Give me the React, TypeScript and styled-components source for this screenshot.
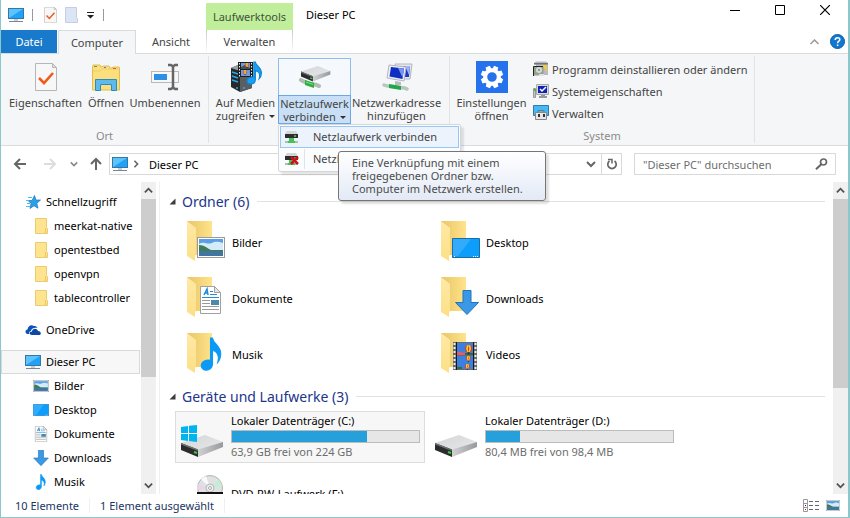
import React from "react";
import styled, { createGlobalStyle, css } from "styled-components";

const GlobalStyle = createGlobalStyle`
  * { box-sizing: border-box; }
  body { margin: 0; background: #8cc8cb; font-family: "Noto Sans", "Open Sans", sans-serif; font-size: 11px; color: #000; }
  button, input { font: inherit; color: inherit; border: 0; padding: 0; margin: 0; background: none; }
  a { color: inherit; text-decoration: none; }
  ul { list-style: none; margin: 0; padding: 0; }
  h1, h2 { margin: 0; font-weight: 400; }
  svg { display: block; flex: none; }
`;

const Window = styled.div`
  display: flex;
  flex-direction: column;
  height: 100vh;
  background: #fff;
  border: solid #8cc8cb;
  border-width: 0 2px 1px 1px;
  overflow: hidden;
`;

/* ---------- title bar ---------- */
const TitleBar = styled.header`
  display: flex;
  height: 30px;
  flex: none;
`;
const QuickAccess = styled.div`
  display: flex;
  align-items: center;
  width: 205px;
  padding-left: 7px;
  gap: 8px;
`;
const QuickDivider = styled.span`
  width: 1px;
  height: 12px;
  background: #9a9a9a;
  margin-right: 3px;
`;
const ContextLabel = styled.div`
  width: 87px;
  margin-top: 3px;
  background: #c0ee9b;
  color: #41543a;
  line-height: 28px;
  text-align: center;
  white-space: nowrap;
`;
const WindowTitle = styled.h1`
  flex: 1;
  padding-left: 13px;
  font-size: 11px;
  line-height: 30px;
`;
const WindowControls = styled.div`
  display: flex;
  padding-right: 1px;
`;
const WindowButton = styled.button`
  display: grid;
  place-items: center;
  width: 45px;
  height: 20px;
`;

/* ---------- tabs ---------- */
const TabRow = styled.nav`
  display: flex;
  height: 24px;
  flex: none;
  border-bottom: 1px solid #dadbdc;
`;
const Tab = styled.button<{ $width: number; $kind?: "file" | "active" | "context" }>`
  width: ${(p) => p.$width}px;
  height: 23px;
  color: #444;
  white-space: nowrap;
  ${(p) => p.$kind === "file" && css`background: #1979ca; color: #fff; margin-right: 1px;`}
  ${(p) => p.$kind === "active" && css`
    height: 24px;
    background: #f5f6f7;
    border: 1px solid #dadbdc;
    border-bottom: 0;
  `}
  ${(p) => p.$kind === "context" && css`
    border: solid transparent;
    border-width: 0 1px;
    border-image: linear-gradient(#c8c8c8, #fff) 1;
  `}
`;
const TabTools = styled.div`
  display: flex;
  align-items: center;
  gap: 11px;
  margin-left: auto;
  padding-right: 3px;
`;

/* ---------- ribbon ---------- */
const Ribbon = styled.section`
  display: flex;
  height: 92px;
  flex: none;
  background: #f5f6f7;
  border-bottom: 1px solid #dadbdc;
  padding: 2px 0;
  color: #444;
`;
const RibbonGroup = styled.div<{ $width: number }>`
  display: flex;
  flex-direction: column;
  width: ${(p) => p.$width}px;
  border-right: 1px solid #e2e3e4;
`;
const GroupBody = styled.div`
  display: flex;
  flex: 1;
  padding: 2px 0 0 4px;
`;
const GroupLabel = styled.div`
  line-height: 14px;
  text-align: center;
  color: #8a8a8a;
`;
const BigButton = styled.button<{ $width: number }>`
  display: flex;
  flex-direction: column;
  align-items: center;
  width: ${(p) => p.$width}px;
  height: 66px;
  white-space: nowrap;
`;
const BigIcon = styled.span`
  display: grid;
  place-items: center;
  width: 100%;
  height: 38px;
`;
const BigText = styled.span`
  flex: 1;
  width: 100%;
  line-height: 13px;
`;
const SplitButton = styled.div`
  position: relative;
  width: 73px;
  height: 66px;
`;
const SplitTop = styled.button`
  display: grid;
  place-items: center;
  width: 100%;
  height: 38px;
  background: #f5f9fd;
  border: 1px solid #90bdeb;
`;
const SplitBottom = styled.button`
  display: block;
  width: 100%;
  height: 29px;
  margin-top: -1px;
  line-height: 13px;
  white-space: nowrap;
  background: #c9dff5;
  border: 1px solid #6ea7e3;
`;
const Caret = styled.i`
  display: inline-block;
  margin-left: 4px;
  vertical-align: 2px;
  border: solid transparent;
  border-width: 3px 3px 0;
  border-top-color: #333;
`;
const SmallList = styled.div`
  display: flex;
  flex-direction: column;
  margin-left: 4px;
`;
const SmallButton = styled.button`
  display: flex;
  align-items: center;
  gap: 3px;
  height: 22px;
  white-space: nowrap;
`;

/* ---------- drop-down menu and tooltip ---------- */
const Menu = styled.ul`
  position: absolute;
  z-index: 2;
  top: 66px;
  left: 0;
  width: 183px;
  padding: 1px;
  background: #fbfcfd;
  border: 1px solid #d5d6d8;
  border-radius: 2px;
  box-shadow: 3px 3px 2px rgba(0, 0, 0, 0.1);
`;
const MenuItem = styled.button<{ $active?: boolean }>`
  display: flex;
  align-items: center;
  width: 100%;
  height: 22px;
  padding-left: 3px;
  border: 1px solid ${(p) => (p.$active ? "#98c6f5" : "transparent")};
  background: ${(p) => (p.$active ? "#ecf3fc" : "transparent")};
  svg { margin-right: 4px; }
  span {
    padding-left: 8px;
    border-left: 1px solid ${(p) => (p.$active ? "transparent" : "#e2e3e4")};
    line-height: 20px;
    white-space: nowrap;
  }
`;
const Tooltip = styled.div`
  position: absolute;
  z-index: 3;
  top: 93px;
  left: 60px;
  width: 208px;
  padding: 4px 13px 5px;
  line-height: 13px;
  color: #4c4c4c;
  white-space: nowrap;
  background: linear-gradient(#fff, #e3eaf6);
  border: 1px solid #767676;
  border-radius: 3px;
  box-shadow: 3px 3px 2px rgba(0, 0, 0, 0.12);
`;

/* ---------- address row ---------- */
const AddressRow = styled.div`
  display: flex;
  align-items: center;
  height: 36px;
  flex: none;
  padding: 0 12px 0 11px;
`;
const NavButton = styled.button<{ $after?: number }>`
  display: grid;
  place-items: center;
  width: 16px;
  height: 20px;
  margin-right: ${(p) => p.$after ?? 0}px;
`;
const AddressBox = styled.div`
  display: flex;
  align-items: center;
  flex: 1;
  height: 22px;
  margin-right: 12px;
  padding-left: 2px;
  border: 1px solid #d9d9d9;
`;
const Crumb = styled.a`
  flex: 1;
  padding-left: 5px;
`;
const AddressButton = styled.button<{ $line?: boolean }>`
  display: grid;
  place-items: center;
  width: 20px;
  height: 20px;
  border-left: ${(p) => (p.$line ? "1px solid #d9d9d9" : "0")};
`;
const SearchBox = styled.label`
  display: flex;
  align-items: center;
  width: 202px;
  height: 22px;
  padding: 0 7px 0 8px;
  border: 1px solid #d9d9d9;
  input { flex: 1; min-width: 0; outline: 0; }
  input::placeholder { color: #6d6d6d; opacity: 1; }
`;

/* ---------- body ---------- */
const Body = styled.div`
  display: flex;
  flex: 1;
  min-height: 0;
`;
const Sidebar = styled.nav`
  width: 140px;
  padding: 8px 1px 0 0;
  overflow: hidden;
`;
const TreeItem = styled.a<{ $level?: number; $selected?: boolean; $gap?: boolean }>`
  display: flex;
  align-items: center;
  gap: 5px;
  height: 24px;
  margin-top: ${(p) => (p.$gap ? 8 : 0)}px;
  padding: 0 0 1px ${(p) => (p.$level ? 31 : 23)}px;
  white-space: nowrap;
  border: 1px solid ${(p) => (p.$selected ? "#d9d9d9" : "transparent")};
  background: ${(p) => (p.$selected ? "#f7f7f7" : "transparent")};
`;
const ScrollTrack = styled.div`
  display: flex;
  flex-direction: column;
  width: 15px;
  flex: none;
  background: #f0f0f0;
`;
const ScrollArrow = styled.button`
  display: grid;
  place-items: center;
  height: 17px;
`;
const ScrollThumb = styled.div<{ $share: number }>`
  flex: ${(p) => p.$share};
  background: #cdcdcd;
`;
const ScrollRest = styled.div<{ $share: number }>`
  flex: ${(p) => p.$share};
`;
const Content = styled.main`
  flex: 1;
  min-width: 0;
  margin-left: 3px;
  padding: 8px 8px 0 9px;
  border-left: 1px solid #f0f0f0;
  overflow: hidden;
`;
const SectionHeader = styled.h2`
  display: flex;
  align-items: center;
  height: 23px;
  padding-bottom: 1px;
  font-size: 14px;
  color: #22358c;
  white-space: nowrap;
  svg { margin-right: 6px; }
  &::after { content: ""; flex: 1; height: 1px; margin-left: 8px; background: #e2e2e2; }
`;
const Tiles = styled.div`
  display: grid;
  grid-template-columns: 250px 250px;
  grid-auto-rows: 52px;
  gap: 4px;
  padding: 3px 0 5px 6px;
`;
const Tile = styled.a<{ $selected?: boolean; $folder?: boolean }>`
  display: flex;
  align-items: center;
  gap: 6px;
  padding-left: ${(p) => (p.$folder ? 11 : 5)}px;
  white-space: nowrap;
  border: 1px solid ${(p) => (p.$selected ? "#dcdcdc" : "transparent")};
  background: ${(p) => (p.$selected ? "#f7f7f7" : "transparent")};
`;
const DriveInfo = styled.div`
  display: flex;
  flex-direction: column;
  padding-bottom: 2px;
  line-height: 16px;
`;
const Muted = styled.span`
  color: #6d6d6d;
`;
const Meter = styled.div`
  width: 189px;
  height: 13px;
  margin: 1px 0;
  background: #e6e6e6;
  border: 1px solid #bcbcbc;
`;
const MeterFill = styled.div`
  height: 100%;
  background: #26a0da;
`;

/* ---------- status bar ---------- */
const StatusBar = styled.footer`
  display: flex;
  align-items: center;
  height: 23px;
  flex: none;
  padding: 0 8px 0 14px;
  color: #22365f;
`;
const StatusText = styled.span`
  padding-right: 10px;
  margin-right: 10px;
  border-right: 1px solid #f0f0f0;
`;
const ViewButtons = styled.div`
  display: flex;
  align-items: center;
  gap: 6px;
  margin-left: auto;
`;

/* ---------- icons ---------- */
const PcIcon = () => (
  <svg width="16" height="16" viewBox="0 0 16 16">
    <rect x=".5" y="1.5" width="15" height="10" fill="#5cc3fd" stroke="#3576a3" />
    <path d="M1 11 15 2v9z" fill="#1fa2f8" />
    <path d="M6 12h4v2H6z" fill="#c7ced4" />
    <path d="M1 14.5h14" stroke="#76879a" />
  </svg>
);
const CheckDoc = ({ w, h }: { w: number; h: number }) => (
  <svg width={w} height={h} viewBox="0 0 22 28">
    <path d="M.5.5h17l4 4v23H.5z" fill="#f7f7f7" stroke="#b6b6b6" />
    <path d="M17.5.5v4h4z" fill="#ddd" stroke="#b6b6b6" />
    <path d="m4 15 5 5L18 10" fill="none" stroke="#f05a1a" strokeWidth="2.600" />
  </svg>
);
const OpenIcon = () => (
  <svg width="28" height="28" viewBox="0 0 28 28">
    <path d="M.5 3.5 1 2h7l1 2h1l1-1h6l1 2h2l1-1h6l.5 1v22H.5z" fill="#fbdf7d" stroke="#e3bd50" />
    <path d="M1 8h7l2-2h17" stroke="#efcd68" fill="none" />
    <path d="M2 3.5h3" stroke="#4aa84a" /><path d="M12 4.5h2" stroke="#3c8ad8" /><path d="M21 5.5h3" stroke="#d85a3c" />
    <path d="M3.500 27.500V16.500h21v11h-5v-6h-11v6z" fill="#5fb9ec" stroke="#2b8cc4" />
  </svg>
);
const RenameIcon = () => (
  <svg width="28" height="28" viewBox="0 0 28 28">
    <rect x=".5" y="8.500" width="27" height="11" fill="#f8f8f8" stroke="#b9b9b9" />
    <rect x="3" y="11" width="13" height="6" fill="#2e8fe5" />
    <path d="M17 2h3l2 1.500L24 2h3M17 26h3l2-1.500 2 1.500h3M22 3v22" stroke="#666" strokeWidth="2.500" fill="none" />
  </svg>
);
const Balloon = ({ x, y, s = 1 }: { x: number; y: number; s?: number }) => (
  <g transform={`translate(${x} ${y}) scale(${s})`}>
    <circle cx="4" cy="4" r="4" fill="#d83a2c" />
    <path d="M2 .6Q.5 4 2.500 7.500L4 8Q2.500 4 4 0zM6 .6Q7.500 4 5.500 7.500L4 8Q5.500 4 4 0z" fill="#f6d52c" />
    <path d="M3 8h2v2H3z" fill="#3c3018" />
  </g>
);
const notePath = "M9 0h2c.5 5 8 7 8 14 0 3-1 6-3 8 2-7-1-10-5-11v12c0 4-3 6-6 6-3 0-5-2-5-4 0-4 5-6 9-5z";
const MediaIcon = () => (
  <svg width="32" height="32" viewBox="0 0 32 32">
    <path d="M1 7 8 4l14 3v20l-12 4-9-5z" fill="#26292b" />
    <path d="M10 10 22 7v20l-12 4z" fill="#5b5e60" />
    <path d="M1 7 8 4l14 3-12 3z" fill="#9b9fa2" />
    <path d="m2 11 6 2M2 15l6 2M2 19l6 2" stroke="#2ca8ea" strokeWidth="1.500" />
    <circle cx="14" cy="27" r="1" fill="#2ca8ea" /><circle cx="7" cy="27" r="1" fill="#2ca8ea" />
    <path d="M8 1h15v15H8z" fill="#202020" /><path d="M11 2h9v6h-9zM11 9h9v6h-9z" fill="#6f9ade" />
    <path d="M11 6l4-2 5 3v1h-9z" fill="#43535f" />
    <path d="M9.500 2v14M21.500 2v14" stroke="#eee" strokeDasharray="1.500 1.500" />
    <Balloon x={15} y={2} s={0.500} /><Balloon x={13} y={9} s={0.500} />
    <g transform="translate(17 1) scale(.76)"><path d={notePath} fill="#18a0f2" stroke="#0d86d8" strokeWidth="1.500" /></g>
  </svg>
);
const DriveShape = () => (
  <g>
    <defs>
      <linearGradient id="driveTop" x2="1" y2="1"><stop offset="0" stopColor="#d3d5d7" /><stop offset="1" stopColor="#e6e8ea" /></linearGradient>
      <linearGradient id="driveSide"><stop offset="0" stopColor="#cfd1d3" /><stop offset="1" stopColor="#97999c" /></linearGradient>
    </defs>
    <path d="M0 8 24 0l18 7-25 8z" fill="url(#driveTop)" />
    <path d="M17 14.500 42 7v5l-25 10z" fill="url(#driveSide)" />
    <path d="M0 8l17 6.500V22L0 15z" fill="#2b2c2e" />
    <path d="M0 8l17 6.500V16L0 9.500z" fill="#6f7173" />
    <path d="M13 17l3 1" stroke="#35d23c" strokeWidth="2" />
  </g>
);
const NetDriveIcon = () => (
  <svg width="32" height="26" viewBox="0 0 32 26">
    <g transform="translate(2 2) scale(.7)"><DriveShape /></g>
    <path d="M2 16c4 2 6 4 10 4s5 1 8 2" stroke="#aebfb2" strokeWidth="4" strokeLinecap="round" fill="none" />
    <path d="M6 16l9 3v5l-9-3z" fill="#2fae42" /><path d="M7 18l7 2.500" stroke="#75e583" />
  </svg>
);
const NetAddressIcon = () => (
  <svg width="32" height="32" viewBox="0 0 32 32">
    <path d="M14 3h17l-2 15H17z" fill="#e8e9ed" stroke="#b4b6bf" /><path d="M17 5h12l-1 11H18z" fill="#1539c9" />
    <path d="m24 5 5 0-1 9z" fill="#9db3f6" />
    <path d="M8 4 25 6l-2 14-17-3z" fill="#eceef3" stroke="#b5b7c0" /><path d="m10 6 13 1.500L21.500 18 8.500 15.500z" fill="#0e2fc1" />
    <path d="m17 7 6 .5-1.500 9z" fill="#7695f3" />
    <path d="M14 20l6 1v3h-6z" fill="#bbb" />
    <path d="M3 24c4 2 8 1 12 2s8 0 11 2" stroke="#b7c7bd" strokeWidth="3.500" fill="none" strokeLinecap="round" />
    <path d="M8 23l12 2v4L8 27z" fill="#1ea84a" />
  </svg>
);
const gearTeeth = [0, 45, 90, 135, 180, 225, 270, 315];
const SettingsIcon = () => (
  <svg width="32" height="32" viewBox="0 0 32 32">
    <path d="M0 0h32v32H0z" fill="#2672ec" />
    <circle cx="16" cy="16" r="6.800" fill="none" stroke="#fff" strokeWidth="4" />
    {gearTeeth.map((a) => (
      <path key={a} d="M13.200 8.500 13.800 4.800h4.400l.6 3.700z" fill="#fff" transform={`rotate(${a + 22} 16 16)`} />
    ))}
  </svg>
);
const UninstallIcon = () => (
  <svg width="16" height="16" viewBox="0 0 16 16">
    <path d="M1 2l2-1.500h10L15 2v12H3V4z" fill="#b9bbc4" /><path d="M1 2h14v1.500H1z" fill="#6d7580" />
    <path d="M9 4h5v7z" fill="#f1c93b" /><path d="M.5 5.500h10v9H.5z" fill="#93a18f" /><path d="M.5 15V5.500H10" fill="none" stroke="#222" />
    <circle cx="6" cy="9" r="3" fill="#d5ddd4" /><circle cx="6" cy="9" r="1" fill="#7a7a7a" /><path d="M6 13h5v2H6z" fill="#e2e2e2" />
  </svg>
);
const SystemIcon = () => (
  <svg width="16" height="16" viewBox="0 0 16 16">
    <path d="M.5 5.500h2v9h-2z" fill="#c8c8c8" stroke="#999" /><path d="M1 6h2v2H1z" fill="#41b949" />
    <path d="M3.500 1.500h12v10h-12z" fill="#dadada" stroke="#aaa" /><path d="M5 3h9v7H5z" fill="#1022b5" />
    <path d="m7 6 2 2 4-4" stroke="#fff" strokeWidth="1.500" fill="none" /><path d="M8 12h4v1h2v2H6v-2h2z" fill="#999" />
  </svg>
);
const ManageIcon = () => (
  <svg width="16" height="16" viewBox="0 0 16 16">
    <path d="M.5.5h15v10H.5z" fill="#45b8f7" stroke="#3779a3" />
    <path d="M5 7V5.500h6V7" fill="none" stroke="#777" /><path d="M2.500 7.500h11v7h-11z" fill="#e8e8e8" stroke="#888" />
    <path d="M5 9h2v3H5zM10 9h2v3h-2z" fill="#333" />
  </svg>
);
const MenuDriveIcon = ({ cross }: { cross?: boolean }) => (
  <svg width="16" height="16" viewBox="0 0 16 16">
    <path d="M3 2h9l2 3H1z" fill="#d4d5d6" /><path d="M1 5h13v4H1z" fill="#2c2e30" /><path d="M10 7h2" stroke="#43d24c" strokeWidth="1.500" />
    <path d="M5 9h5v3h4v2H1v-2h4z" fill="#4cbf5a" /><path d="M1 12h3v2H1zM11 12h3v2h-3z" fill="#9ccba1" />
    {cross && <path d="m7 6 7 7m0-7-7 7" stroke="#d0111b" strokeWidth="2.500" />}
  </svg>
);
const StarIcon = () => (
  <svg width="16" height="16" viewBox="0 0 16 16">
    <path d="M9.500 1.500 11 6h4.500l-3.700 3.200 1.200 5L9 11.800 5 14.500 6 9.500 3 6.500h4z" fill="#2aa0e8" stroke="#1778bd" strokeWidth=".7" />
    <path d="M3 3.500h4M1 6.500h3M2 9.500h3M1 12.500h4" stroke="#55b7ef" />
  </svg>
);
const YellowFolder = () => (
  <svg width="16" height="18" viewBox="0 0 16 18">
    <path d="M2.500 1.500h11v9l1 1v5h-12z" fill="#ffe48f" stroke="#eccb6c" /><path d="M12.500 11v5.500" stroke="#e8c766" />
  </svg>
);
const CloudIcon = () => (
  <svg width="16" height="16" viewBox="0 0 16 16">
    <path d="M3 12C0 12-.5 8 2.500 7.500 3 4 6 2 9 4c2-.5 3 1 3.500 2C9 5 6 7 6 9c-2 .5-2 2-1.500 3z" fill="#0d52b8" />
    <path d="M7 13c-3 0-3-3.500 0-3.500C7.500 6 12 6 13 9c3 0 4 4 1 4z" fill="#0d48a6" />
  </svg>
);
const Landscape = ({ w, h }: { w: number; h: number }) => (
  <svg width={w} height={h} viewBox="0 0 28 21" preserveAspectRatio="none">
    <path d="M0 0h28v21H0z" fill="#9b9b9b" /><path d="M1 1h26v19H1z" fill="#fff" /><path d="M2 2h24v17H2z" fill="#5b9ee6" />
    <path d="M2 7c5-3 8 1 13-1 4-2 7-1 11 0v7H2z" fill="#d4ecf8" />
    <path d="M2 8c5 0 8 3 12 5h12v2H2z" fill="#3e7c58" /><path d="M2 14h24v5H2z" fill="#41759f" />
  </svg>
);
const DesktopPic = ({ w, h }: { w: number; h: number }) => (
  <svg width={w} height={h} viewBox="0 0 28 20" preserveAspectRatio="none">
    <path d="M.5.5h27v19H.5z" fill="#0d9dfa" stroke="#176fa8" /><path d="M1 1h18L6 18H1z" fill="#32abfc" />
    <path d="M2 18.500h2M21 18.500h5" stroke="#fff" strokeDasharray="1 1" />
  </svg>
);
const DocPic = ({ w, h }: { w: number; h: number }) => (
  <svg width={w} height={h} viewBox="0 0 21 28">
    <path d="M.5.5h14l6 6v21H.5z" fill="#fff" stroke="#a0a0a0" /><path d="M14.500.5v6h6z" fill="#e6e6e6" stroke="#a0a0a0" />
    <path d="m4 9 3-6 1 6M5 7h3" stroke="#2389d8" strokeWidth="1.500" fill="none" />
    <path d="M10 5.500h3M10 8.500h7M2 11.500h17" stroke="#2389d8" />
    <path d="M2 14.500h8M2 17.500h8M2 20.500h17M2 23.500h17" stroke="#999" /><path d="M11 14h8v5h-8z" fill="#4c87ad" />
  </svg>
);
const ArrowPic = ({ w, h }: { w: number; h: number }) => (
  <svg width={w} height={h} viewBox="0 0 24 25">
    <path d="M8 .5h8v12h7.500L12 24.500.5 12.500H8z" fill="#3b98e6" stroke="#2374bc" />
  </svg>
);
const NotePic = ({ w, h }: { w: number; h: number }) => (
  <svg width={w} height={h} viewBox="-1 -1 22 33"><path d={notePath} transform="scale(1 1.080)" fill="#0a9af5" stroke="#0a9af5" /></svg>
);
const FilmPic = () => (
  <svg width="24" height="28" viewBox="0 0 24 28">
    <path d="M0 0h24v28H0z" fill="#6b6b6b" /><path d="M4 1h16v12H4zM4 14h16v13H4z" fill="#3b7fe0" />
    <path d="M4 10c3-2 5 2 8 0v3H4z" fill="#e75a6e" /><path d="M12 11h8v2h-8zM4 25h5v2H4z" fill="#2f6b3a" />
    <Balloon x={12} y={3} s={0.900} /><Balloon x={13} y={14} s={0.600} /><Balloon x={12} y={22} s={0.600} />
    <path d="M3.500 0v28M20.500 0v28" stroke="#171717" />
    <path d="M1.500 1v26M22.500 1v26" stroke="#eee" strokeWidth="2" strokeDasharray="2 2" />
  </svg>
);
const FolderArt = styled.span`
  display: block;
  position: relative;
  width: 39px;
  height: 42px;
  flex: none;
`;
const FolderEmblem = styled.span<{ $x: number; $y: number }>`
  position: absolute;
  left: ${(p) => p.$x}px;
  top: ${(p) => p.$y}px;
`;
const BigFolder = ({ children, x, y }: { children: React.ReactNode; x: number; y: number }) => (
  <FolderArt>
    <svg width="39" height="42" viewBox="0 0 39 42">
      <defs>
        <linearGradient id="back"><stop offset="0" stopColor="#e9c566" /><stop offset="1" stopColor="#ffe38b" /></linearGradient>
        <linearGradient id="flap" x2="0" y2="1"><stop offset="0" stopColor="#ffe9a6" /><stop offset="1" stopColor="#fddf86" /></linearGradient>
      </defs>
      <path d="M0 0h25v34H2z" fill="url(#back)" />
      <path d="M0 0l9 7v27l-1 1v5L0 35z" fill="url(#flap)" />
    </svg>
    <FolderEmblem $x={x} $y={y}>{children}</FolderEmblem>
  </FolderArt>
);
const DriveIcon = ({ system }: { system?: boolean }) => (
  <svg width="44" height="42" viewBox="0 0 44 42">
    <g transform="translate(0 19)"><DriveShape /></g>
    {system && <path transform="translate(0 4)" d="M0 7l7-1v7H0zM8 5.800 16 5v8H8zM0 14h7v7l-7-1zM8 14h8v8l-8-1z" fill="#00b4f0" />}
  </svg>
);
const DiscIcon = () => (
  <svg width="44" height="42" viewBox="0 0 44 42">
    <circle cx="29" cy="16" r="12.500" fill="#dfe2e2" stroke="#b2b5b5" />
    <path d="M29 16 20 7a13 13 0 0 1 5-3z" fill="#f6fafa" /><path d="M29 16 38 8a13 13 0 0 1 3 6z" fill="#c2eed5" />
    <path d="M29 16 17 12a13 13 0 0 0-1 6z" fill="#ecd3ea" />
    <circle cx="29" cy="16" r="4" fill="#eee" stroke="#b6b6b6" /><circle cx="29" cy="16" r="1.500" fill="#fff" stroke="#aaa" />
    <path d="M16 20h26v14H16z" fill="#111" />
  </svg>
);
const Chevron = ({ dir = "down", color = "#666", size = 9 }: { dir?: "down" | "up" | "right"; color?: string; size?: number }) => (
  <svg width={size} height={size} viewBox="0 0 10 10">
    <path d={dir === "down" ? "m1 3 4 4 4-4" : dir === "up" ? "m1 7 4-4 4 4" : "m3 1 4 4-4 4"} fill="none" stroke={color} strokeWidth="2" />
  </svg>
);
const Arrow = ({ dir, color }: { dir: "left" | "right" | "up"; color: string }) => (
  <svg width="14" height="14" viewBox="0 0 14 14">
    <path d="M13 7H2M7 2 2 7l5 5" fill="none" stroke={color} strokeWidth="2" transform={`rotate(${{ left: 0, right: 180, up: 90 }[dir]} 7 7)`} />
  </svg>
);
const Triangle = () => (
  <svg width="7" height="7" viewBox="0 0 7 7"><path d="M6.500.5v6h-6z" fill="#3c3c3c" /></svg>
);

/* ---------- data ---------- */
const tree = [
  { name: "Schnellzugriff", icon: <StarIcon /> },
  { name: "meerkat-native", icon: <YellowFolder />, level: 1 },
  { name: "opentestbed", icon: <YellowFolder />, level: 1 },
  { name: "openvpn", icon: <YellowFolder />, level: 1 },
  { name: "tablecontroller", icon: <YellowFolder />, level: 1 },
  { name: "OneDrive", icon: <CloudIcon />, gap: true },
  { name: "Dieser PC", icon: <PcIcon />, gap: true, selected: true },
  { name: "Bilder", icon: <Landscape w={16} h={12} />, level: 1 },
  { name: "Desktop", icon: <DesktopPic w={16} h={12} />, level: 1 },
  { name: "Dokumente", icon: <DocPic w={16} h={16} />, level: 1 },
  { name: "Downloads", icon: <ArrowPic w={16} h={16} />, level: 1 },
  { name: "Musik", icon: <NotePic w={16} h={16} />, level: 1 },
];
const folders = [
  { name: "Bilder", x: 10, y: 16, art: <Landscape w={28} h={21} /> },
  { name: "Desktop", x: 11, y: 17, art: <DesktopPic w={28} h={20} /> },
  { name: "Dokumente", x: 13, y: 9, art: <DocPic w={21} h={28} /> },
  { name: "Downloads", x: 14, y: 13, art: <ArrowPic w={24} h={25} /> },
  { name: "Musik", x: 13, y: 4, art: <NotePic w={23} h={34} /> },
  { name: "Videos", x: 12, y: 9, art: <FilmPic /> },
];
const drives = [
  { name: "Lokaler Datenträger (C:)", free: "63,9 GB frei von 224 GB", used: 72, system: true },
  { name: "Lokaler Datenträger (D:)", free: "80,4 MB frei von 98,4 MB", used: 18 },
];

const Scrollbar = ({ thumb, rest }: { thumb: number; rest: number }) => (
  <ScrollTrack>
    <ScrollArrow aria-label="Nach oben"><Chevron dir="up" color="#505050" /></ScrollArrow>
    <ScrollThumb $share={thumb} />
    <ScrollRest $share={rest} />
    <ScrollArrow aria-label="Nach unten"><Chevron color="#505050" /></ScrollArrow>
  </ScrollTrack>
);

export default function App() {
  return (
    <>
      <GlobalStyle />
      <Window>
        <TitleBar>
          <QuickAccess>
            <PcIcon />
            <QuickDivider />
            <button aria-label="Eigenschaften"><CheckDoc w={13} h={16} /></button>
            <button aria-label="Neuer Ordner">
              <svg width="14" height="16" viewBox="0 0 14 16"><path d="M.5.5h11v10l1 1v4H.5z" fill="#dbe5f5" stroke="#c3cee2" /></svg>
            </button>
            <button aria-label="Symbolleiste anpassen">
              <svg width="8" height="7" viewBox="0 0 8 7"><path d="M0 0h7v1H0zM0 3h7L3.500 6.500z" fill="#222" /></svg>
            </button>
            <QuickDivider />
          </QuickAccess>
          <ContextLabel>Laufwerktools</ContextLabel>
          <WindowTitle>Dieser PC</WindowTitle>
          <WindowControls>
            <WindowButton aria-label="Minimieren"><svg width="10" height="10"><path d="M0 5.500h10" stroke="#000" /></svg></WindowButton>
            <WindowButton aria-label="Maximieren"><svg width="10" height="10"><path d="M.5.5h9v9h-9z" stroke="#000" fill="none" /></svg></WindowButton>
            <WindowButton aria-label="Schließen"><svg width="10" height="10"><path d="m0 0 10 10M10 0 0 10" stroke="#000" strokeWidth="1.200" /></svg></WindowButton>
          </WindowControls>
        </TitleBar>

        <TabRow>
          <Tab $width={56} $kind="file">Datei</Tab>
          <Tab $width={78} $kind="active">Computer</Tab>
          <Tab $width={70}>Ansicht</Tab>
          <Tab $width={87} $kind="context">Verwalten</Tab>
          <TabTools>
            <button aria-label="Menüband minimieren">
              <svg width="9" height="6" viewBox="0 0 9 6"><path d="m.5 5 4-4 4 4" fill="none" stroke="#999" strokeWidth="1.500" /></svg>
            </button>
            <button aria-label="Hilfe">
              <svg width="15" height="15" viewBox="0 0 15 15">
                <circle cx="7.500" cy="7.500" r="7" fill="#1177cf" stroke="#0b5ca5" />
                <path d="M5.200 6c0-3.200 4.800-3 4.600-.3-.1 1.500-2.200 1.600-2.200 3.500M7.600 10.500v1.500" fill="none" stroke="#fff" strokeWidth="1.500" />
              </svg>
            </button>
          </TabTools>
        </TabRow>

        <Ribbon>
          <RibbonGroup $width={208}>
            <GroupBody>
              <BigButton $width={81}><BigIcon><CheckDoc w={22} h={28} /></BigIcon><BigText>Eigenschaften</BigText></BigButton>
              <BigButton $width={40}><BigIcon><OpenIcon /></BigIcon><BigText>Öffnen</BigText></BigButton>
              <BigButton $width={78}><BigIcon><RenameIcon /></BigIcon><BigText>Umbenennen</BigText></BigButton>
            </GroupBody>
            <GroupLabel>Ort</GroupLabel>
          </RibbonGroup>
          <RibbonGroup $width={241}>
            <GroupBody>
              <BigButton $width={65}><BigIcon><MediaIcon /></BigIcon><BigText>Auf Medien<br />zugreifen<Caret /></BigText></BigButton>
              <SplitButton>
                <SplitTop aria-label="Netzlaufwerk verbinden"><NetDriveIcon /></SplitTop>
                <SplitBottom aria-haspopup="menu" aria-expanded="true">Netzlaufwerk<br />verbinden<Caret /></SplitBottom>
                <Menu>
                  <li><MenuItem $active><MenuDriveIcon /><span>Netzlaufwerk verbinden</span></MenuItem></li>
                  <li><MenuItem><MenuDriveIcon cross /><span>Netzlaufwerk trennen</span></MenuItem></li>
                </Menu>
                <Tooltip role="tooltip">
                  Eine Verknüpfung mit einem<br />freigegebenen Ordner bzw.<br />Computer im Netzwerk erstellen.
                </Tooltip>
              </SplitButton>
              <BigButton $width={91}><BigIcon><NetAddressIcon /></BigIcon><BigText>Netzwerkadresse<br />hinzufügen</BigText></BigButton>
            </GroupBody>
          </RibbonGroup>
          <RibbonGroup $width={305}>
            <GroupBody>
              <BigButton $width={75}><BigIcon><SettingsIcon /></BigIcon><BigText>Einstellungen<br />öffnen</BigText></BigButton>
              <SmallList>
                <SmallButton><UninstallIcon />Programm deinstallieren oder ändern</SmallButton>
                <SmallButton><SystemIcon />Systemeigenschaften</SmallButton>
                <SmallButton><ManageIcon />Verwalten</SmallButton>
              </SmallList>
            </GroupBody>
            <GroupLabel>System</GroupLabel>
          </RibbonGroup>
        </Ribbon>

        <AddressRow>
          <NavButton $after={14} aria-label="Zurück"><Arrow dir="left" color="#666" /></NavButton>
          <NavButton $after={8} aria-label="Vorwärts"><Arrow dir="right" color="#ddd" /></NavButton>
          <NavButton $after={6} aria-label="Verlauf"><Chevron size={8} color="#888" /></NavButton>
          <NavButton $after={5} aria-label="Nach oben"><Arrow dir="up" color="#666" /></NavButton>
          <AddressBox>
            <PcIcon />
            <NavButton aria-label="Pfad"><Chevron dir="right" size={8} /></NavButton>
            <Crumb href="#pc">Dieser PC</Crumb>
            <AddressButton aria-label="Vorherige Orte"><Chevron size={10} /></AddressButton>
            <AddressButton $line aria-label="Aktualisieren">
              <svg width="12" height="12" viewBox="0 0 12 12">
                <path d="M8.500 3a4.200 4.200 0 1 1-5 0" fill="none" stroke="#666" strokeWidth="1.700" /><path d="M2 1.500h4v4" fill="none" stroke="#666" strokeWidth="1.500" />
              </svg>
            </AddressButton>
          </AddressBox>
          <SearchBox>
            <input type="search" aria-label="Suchen" placeholder={'"Dieser PC" durchsuchen'} />
            <svg width="13" height="12" viewBox="0 0 13 12"><circle cx="8.500" cy="4" r="3" fill="none" stroke="#666" strokeWidth="1.700" /><path d="M6.300 6.300 1 11.300" stroke="#666" strokeWidth="2" /></svg>
          </SearchBox>
        </AddressRow>

        <Body>
          <Sidebar>
            {tree.map((t) => (
              <TreeItem key={t.name} href="#ort" $level={t.level} $selected={t.selected} $gap={t.gap}>
                {t.icon}{t.name}
              </TreeItem>
            ))}
          </Sidebar>
          <Scrollbar thumb={177} rest={100} />
          <Content>
            <SectionHeader><Triangle />Ordner (6)</SectionHeader>
            <Tiles>
              {folders.map((f) => (
                <Tile key={f.name} href="#ordner" $folder><BigFolder x={f.x} y={f.y}>{f.art}</BigFolder>{f.name}</Tile>
              ))}
            </Tiles>
            <SectionHeader><Triangle />Geräte und Laufwerke (3)</SectionHeader>
            <Tiles>
              {drives.map((d) => (
                <Tile key={d.name} href="#laufwerk" $selected={d.system}>
                  <DriveIcon system={d.system} />
                  <DriveInfo>
                    <span>{d.name}</span>
                    <Meter role="meter" aria-label={d.name} aria-valuenow={d.used}><MeterFill style={{ width: `${d.used}%` }} /></Meter>
                    <Muted>{d.free}</Muted>
                  </DriveInfo>
                </Tile>
              ))}
              <Tile href="#laufwerk"><DiscIcon />DVD-RW-Laufwerk (F:)</Tile>
            </Tiles>
          </Content>
          <Scrollbar thumb={188} rest={89} />
        </Body>

        <StatusBar>
          <StatusText>10 Elemente</StatusText>
          <StatusText>1 Element ausgewählt</StatusText>
          <ViewButtons>
            <button aria-label="Details">
              <svg width="17" height="13" viewBox="0 0 17 13">
                <path d="M.5.5h4v12h-4zM.5 4.500h4M.5 8.500h4" fill="none" stroke="#999" />
                <path d="M6 2.500h4m2 0h4M6 6.500h4m2 0h4M6 10.500h4m2 0h4" stroke="#666" /><path d="M2 10h1v1H2z" fill="red" /><path d="M2 6h1v1H2z" fill="blue" />
              </svg>
            </button>
            <button aria-label="Große Symbole"><Landscape w={14} h={11} /></button>
          </ViewButtons>
        </StatusBar>
      </Window>
    </>
  );
}
